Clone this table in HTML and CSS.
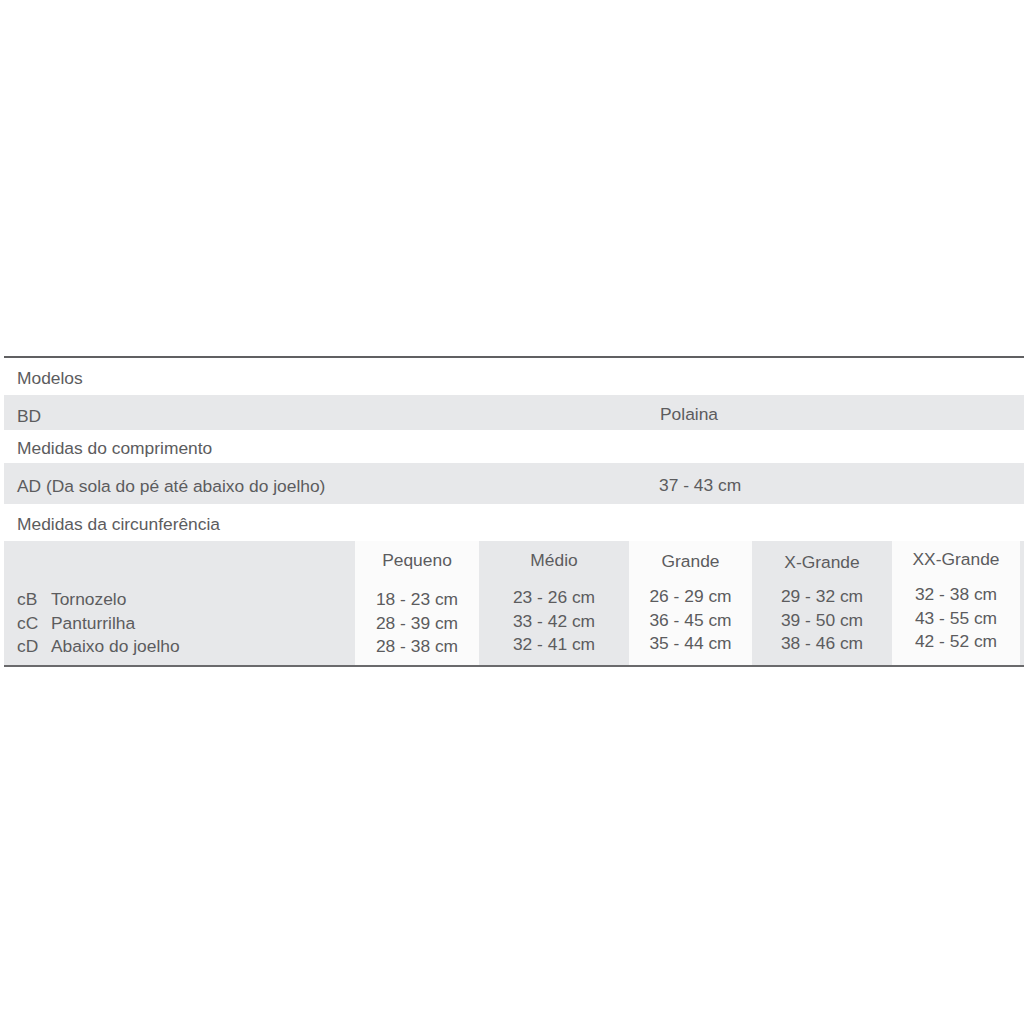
FILE: index.html
```html
<!DOCTYPE html>
<html lang="pt-BR">
<head>
<meta charset="utf-8">
<title>Tabela de medidas - Polaina</title>
<link rel="stylesheet" href="styles.css">
</head>
<body>
<main class="sheet">
  <section class="spec">
    <div class="row row--white row--modelos"><span class="label">Modelos</span></div>
    <div class="row row--gray row--bd"><span class="label">BD</span><span class="value value--bd">Polaina</span></div>
    <div class="row row--white row--comp"><span class="label">Medidas do comprimento</span></div>
    <div class="row row--gray row--ad"><span class="label">AD (Da sola do pé até abaixo do joelho)</span><span class="value value--ad">37 - 43 cm</span></div>
    <div class="row row--white row--circ"><span class="label">Medidas da circunferência</span></div>
    <div class="sizes">
      <div class="col col--labels">
        <span class="code">cB</span><span class="name">Tornozelo</span>
        <span class="code">cC</span><span class="name">Panturrilha</span>
        <span class="code">cD</span><span class="name">Abaixo do joelho</span>
      </div>
      <div class="col col--size col--light col--p">
        <span class="head">Pequeno</span>
        <span class="data">18 - 23 cm</span>
        <span class="data">28 - 39 cm</span>
        <span class="data">28 - 38 cm</span>
      </div>
      <div class="col col--size col--shade col--m">
        <span class="head">Médio</span>
        <span class="data">23 - 26 cm</span>
        <span class="data">33 - 42 cm</span>
        <span class="data">32 - 41 cm</span>
      </div>
      <div class="col col--size col--light col--g">
        <span class="head">Grande</span>
        <span class="data">26 - 29 cm</span>
        <span class="data">36 - 45 cm</span>
        <span class="data">35 - 44 cm</span>
      </div>
      <div class="col col--size col--shade col--xg">
        <span class="head">X-Grande</span>
        <span class="data">29 - 32 cm</span>
        <span class="data">39 - 50 cm</span>
        <span class="data">38 - 46 cm</span>
      </div>
      <div class="col col--size col--light col--xxg">
        <span class="head">XX-Grande</span>
        <span class="data">32 - 38 cm</span>
        <span class="data">43 - 55 cm</span>
        <span class="data">42 - 52 cm</span>
      </div>
      <div class="col col--shade col--rest"></div>
    </div>
  </section>
</main>
</body>
</html>
```

FILE: styles.css
```css
html, body {
  margin: 0;
  padding: 0;
  background: #ffffff;
}

body {
  font-family: "Liberation Sans", Arial, sans-serif;
  font-size: 17.4px;
  color: #5c5c5e;
  width: 1024px;
  height: 1024px;
  overflow: hidden;
}

.sheet {
  padding-top: 356px;
  padding-left: 4px;
}

.spec {
  border-top: 2px solid #606062;
  border-bottom: 2px solid #6a6a6c;
}

.row {
  display: flex;
  align-items: flex-start;
  padding-left: 13px;
  line-height: 20px;
  box-sizing: border-box;
}

.row--white { background: #ffffff; }
.row--gray { background: #e7e8ea; }

.row--modelos { height: 37px; padding-top: 10px; }
.row--bd { height: 35px; padding-top: 11px; }
.row--comp { height: 33px; padding-top: 8px; }
.row--ad { height: 41px; padding-top: 13px; }
.row--circ { height: 37px; padding-top: 10px; }

.label {
  white-space: nowrap;
}

.value {
  width: 348px;
  white-space: nowrap;
}

.row--bd .label { flex: 0 0 643px; }
.row--ad .label { flex: 0 0 642px; }
.value--bd { margin-top: -2px; }
.value--ad { margin-top: -1px; }

.sizes {
  display: flex;
  height: 124px;
}

.col {
  box-sizing: border-box;
}

.col--labels {
  width: 351px;
  background: #e7e8ea;
  padding: 47px 0 0 13px;
  display: grid;
  grid-template-columns: 34px auto;
  grid-auto-rows: 23.5px;
  align-content: start;
  line-height: 23.5px;
}

.col--size {
  display: flex;
  flex-direction: column;
  align-items: center;
  padding-top: var(--head-top, 9px);
}

.col--light { background: #fbfbfb; }
.col--shade { background: #e7e8ea; }

.head {
  line-height: 20px;
  margin-bottom: var(--gap, 18px);
}

.data {
  line-height: 23.5px;
  white-space: nowrap;
}

.col--p { width: 124px; --head-top: 9px; --gap: 18px; }
.col--m { width: 150px; --head-top: 9px; --gap: 16px; }
.col--g { width: 123px; --head-top: 10px; --gap: 14px; }
.col--xg { width: 140px; --head-top: 11px; --gap: 13px; }
.col--xxg { width: 128px; --head-top: 8px; --gap: 14px; }
.col--rest { flex: 1; }
```
